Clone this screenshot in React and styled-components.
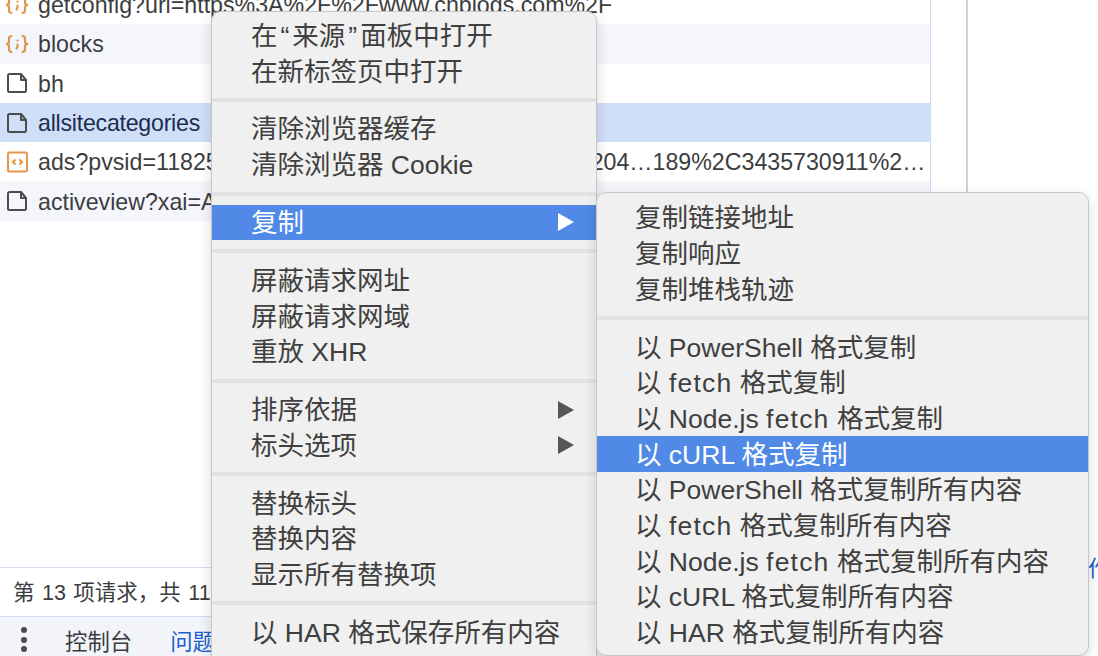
import React from 'react'
import styled, { createGlobalStyle } from 'styled-components'

const GlobalStyle = createGlobalStyle`
  html, body {
    margin: 0;
    height: 100%;
    overflow: hidden;
    background: #fff;
  }
  body {
    font-family: 'Liberation Sans', 'Noto Sans CJK SC', sans-serif;
  }
`

const Page = styled.div`
  position: relative;
  display: flex;
  width: 1098px;
  height: 656px;
  overflow: hidden;
  color: #3c3d40;
`

const NetworkPanel = styled.div`
  display: flex;
  flex-direction: column;
  width: 968px;
  flex-shrink: 0;
  border-right: 2px solid #d0d0d2;
  box-sizing: border-box;
`

const Columns = styled.div`
  flex: 1;
  display: flex;
  min-height: 0;
`

const RequestList = styled.div`
  width: 931px;
  flex-shrink: 0;
  margin-top: -15px;
  border-right: 1px solid #cfd8f3;
  box-sizing: border-box;
`

const Row = styled.div`
  display: flex;
  align-items: center;
  gap: 9px;
  height: 39.3px;
  padding-left: 5px;
  font-size: 23.2px;
  white-space: nowrap;
  overflow: hidden;
  letter-spacing: ${p => (p.$selected ? '-0.25px' : '0')};
  background: ${p => (p.$selected ? '#d0dff8' : p.$tint ? '#f4f6fc' : '#fff')};
  color: ${p => (p.$selected ? '#1c2c52' : '#3c3d40')};
`

const RowIcon = styled.svg`
  width: 24px;
  height: 24px;
  flex-shrink: 0;
`

const RowName = styled.span`
  flex: 1;
  min-width: 0;
  padding-top: 2px;
`

const StatusBar = styled.div`
  display: flex;
  align-items: center;
  height: 50px;
  padding: 0 0 3px 13px;
  font-size: 21.5px;
  word-spacing: 1.5px;
  background: #fff;
  border-top: 1px solid #d5dcf0;
  border-bottom: 1px solid #d5dcf0;
  box-sizing: border-box;
`

const Drawer = styled.div`
  display: flex;
  align-items: center;
  height: 39px;
  padding: 6px 0 0 21px;
  box-sizing: border-box;
  font-size: 22.4px;
  background: #f2f4f9;
`

const Dots = styled.div`
  display: flex;
  flex-direction: column;
  gap: 3.5px;
  margin-right: 38px;

  span {
    width: 6px;
    height: 6px;
    border-radius: 50%;
    background: #4a4b4f;
  }
`

const DrawerTab = styled.span`
  margin-right: 38px;
  color: ${p => (p.$active ? '#1a5fd0' : '#3c3d40')};
`

const SidePanel = styled.div`
  flex: 1;
  display: flex;
  flex-direction: column;
  justify-content: flex-end;
  padding-left: 120px;
  padding-bottom: 73px;
  overflow: hidden;
`

const SideLink = styled.span`
  font-size: 22px;
  line-height: 28px;
  color: #1a5fd0;
`

const Menu = styled.div`
  position: absolute;
  box-sizing: border-box;
  background: #f0f0f0;
  color: #3f3f3f;
  font-size: 26.5px;
  border-radius: 10px;
  border: 1px solid #c6c6c6;
  box-shadow: 0 4px 14px rgba(0, 0, 0, 0.14);
`

const MainMenu = styled(Menu)`
  left: 211px;
  top: 11px;
  width: 386px;
  padding-top: 5.5px;
  height: 660px;
`

const SubMenu = styled(Menu)`
  left: 596px;
  top: 192px;
  width: 493px;
  height: 464px;
  padding-top: 7px;
`

const Item = styled.div`
  display: flex;
  align-items: center;
  justify-content: space-between;
  height: 35.7px;
  box-sizing: border-box;
  padding: 0 22px 4px ${p => p.$indent}px;
  white-space: nowrap;
  background: ${p => (p.$active ? '#5089e6' : 'transparent')};
  color: ${p => (p.$active ? '#fff' : 'inherit')};
`

const Separator = styled.div`
  height: 4px;
  margin: 9.1px 0;
  background: #e2e2e2;
`

const Arrow = styled.span`
  width: 0;
  height: 0;
  margin-top: 4px;
  border-top: 9px solid transparent;
  border-bottom: 9px solid transparent;
  border-left: 16px solid ${p => (p.$active ? '#fff' : '#55565a')};
`

const Quote = styled.span`
  padding: 0 3px;
`

const FetchWord = styled.span`
  letter-spacing: 1.2px;
`

const FileIcon = () => (
  <RowIcon viewBox="0 0 24 24" fill="none" stroke="#4a4c50" strokeWidth="2" strokeLinejoin="round">
    <path d="M3 4.500A1.500 1.500 0 0 1 4.500 3H16l5 6v10.500a1.500 1.500 0 0 1-1.500 1.500h-15A1.500 1.500 0 0 1 3 19.500z" />
    <path d="M16 3v6h5" />
  </RowIcon>
)

const ScriptIcon = () => (
  <RowIcon viewBox="0 0 24 24" fill="none" stroke="#e0964a" strokeWidth="2.200" strokeLinecap="round">
    <path d="M6.500 4C4 4 4 5.500 4 7v2.500C4 11 3 12 1 12c2 0 3 1 3 2.500V17c0 1.500 0 3 2.500 3" />
    <path d="M17.500 4C20 4 20 5.500 20 7v2.500c0 1.500 1 2.500 3 2.500-2 0-3 1-3 2.500V17c0 1.500 0 3-2.500 3" />
    <path d="M12.500 8.500v.1M12.500 12.500v2l-1 2" />
  </RowIcon>
)

const AdIcon = () => (
  <RowIcon viewBox="0 0 24 24" fill="none" stroke="#e8944a" strokeWidth="2">
    <rect x="3" y="2.500" width="19" height="19" rx="1.500" />
    <path d="M10.500 9.500 8 12l2.500 2.500M14.500 9.500 17 12l-2.500 2.500" strokeWidth="2.200" />
  </RowIcon>
)

const rows = [
  { icon: <ScriptIcon />, name: 'getconfig?url=https%3A%2F%2Fwww.cnblogs.com%2F' },
  { icon: <ScriptIcon />, name: 'blocks', tint: true },
  { icon: <FileIcon />, name: 'bh' },
  { icon: <FileIcon />, name: 'allsitecategories', selected: true },
  { icon: <AdIcon />, name: 'ads?pvsid=1182526730288204&correlator=22041597204…189%2C3435730911%2…' },
  { icon: <FileIcon />, name: 'activeview?xai=AKAOjsu', tint: true },
]

const mainGroups = [
  [
    {
      id: 'sources',
      label: (
        <>
          在<Quote>“</Quote>来源<Quote>”</Quote>面板中打开
        </>
      ),
    },
    { label: '在新标签页中打开' },
  ],
  [{ label: '清除浏览器缓存' }, { label: '清除浏览器 Cookie' }],
  [{ label: '复制', active: true, arrow: true }],
  [{ label: '屏蔽请求网址' }, { label: '屏蔽请求网域' }, { label: '重放 XHR' }],
  [{ label: '排序依据', arrow: true }, { label: '标头选项', arrow: true }],
  [{ label: '替换标头' }, { label: '替换内容' }, { label: '显示所有替换项' }],
  [{ label: '以 HAR 格式保存所有内容' }],
]

const withFetch = text => {
  const [before, after] = text.split('fetch')
  return (
    <>
      {before}
      <FetchWord>fetch</FetchWord>
      {after}
    </>
  )
}

const subGroups = [
  [{ label: '复制链接地址' }, { label: '复制响应' }, { label: '复制堆栈轨迹' }],
  [
    { label: '以 PowerShell 格式复制' },
    { id: 'f1', label: withFetch('以 fetch 格式复制') },
    { id: 'f2', label: withFetch('以 Node.js fetch 格式复制') },
    { label: '以 cURL 格式复制', active: true },
    { label: '以 PowerShell 格式复制所有内容' },
    { id: 'f3', label: withFetch('以 fetch 格式复制所有内容') },
    { id: 'f4', label: withFetch('以 Node.js fetch 格式复制所有内容') },
    { label: '以 cURL 格式复制所有内容' },
    { label: '以 HAR 格式复制所有内容' },
  ],
]

const MenuGroups = ({ groups, indent }) =>
  groups.map((group, i) => (
    <React.Fragment key={i}>
      {i > 0 && <Separator />}
      {group.map(item => (
        <Item key={item.id || item.label} $active={item.active} $indent={indent}>
          <span>{item.label}</span>
          {item.arrow && <Arrow $active={item.active} />}
        </Item>
      ))}
    </React.Fragment>
  ))

export default function App() {
  return (
    <>
      <GlobalStyle />
      <Page>
        <NetworkPanel>
          <Columns>
            <RequestList>
              {rows.map(row => (
                <Row key={row.name} $selected={row.selected} $tint={row.tint}>
                  {row.icon}
                  <RowName>{row.name}</RowName>
                </Row>
              ))}
            </RequestList>
          </Columns>
          <StatusBar>第 13 项请求，共 117 项请求</StatusBar>
          <Drawer>
            <Dots>
              <span />
              <span />
              <span />
            </Dots>
            <DrawerTab>控制台</DrawerTab>
            <DrawerTab $active>问题</DrawerTab>
          </Drawer>
        </NetworkPanel>
        <SidePanel>
          <SideLink>作</SideLink>
        </SidePanel>
        <MainMenu>
          <MenuGroups groups={mainGroups} indent={39} />
        </MainMenu>
        <SubMenu>
          <MenuGroups groups={subGroups} indent={38} />
        </SubMenu>
      </Page>
    </>
  )
}
